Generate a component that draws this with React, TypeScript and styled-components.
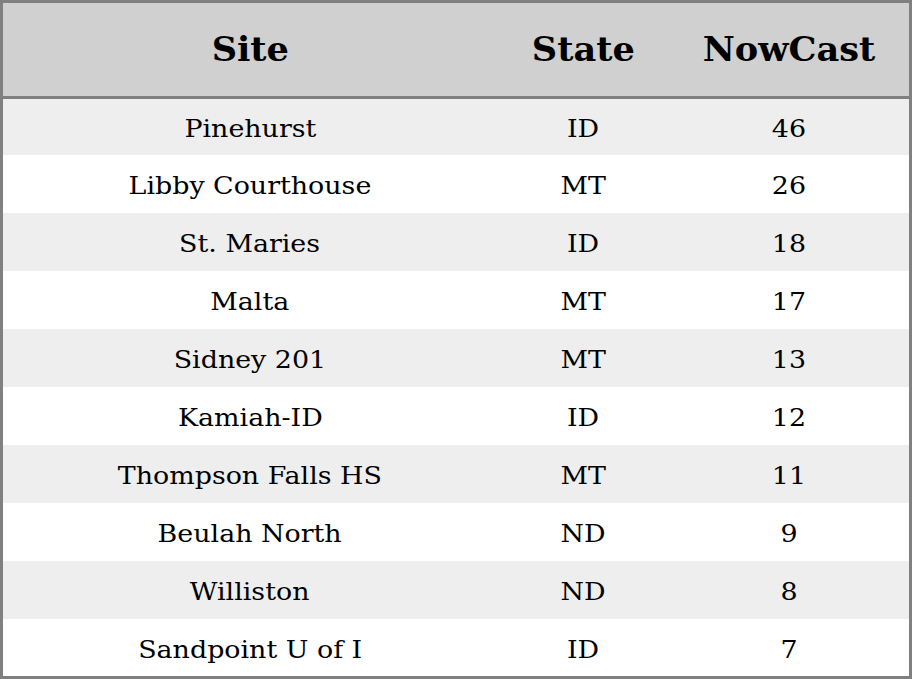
import React from "react";
import styled, { createGlobalStyle } from "styled-components";

const GlobalStyle = createGlobalStyle`
  html, body {
    margin: 0;
    padding: 0;
    background: #ffffff;
  }
`;

const columns = "494px 172px 1fr";

const TableFrame = styled.div`
  box-sizing: border-box;
  width: 912px;
  height: 679px;
  border: 3px solid #808080;
  display: flex;
  flex-direction: column;
  font-family: "DejaVu Serif", "Liberation Serif", serif;
  color: #000000;
`;

const HeaderRow = styled.div`
  display: grid;
  grid-template-columns: ${columns};
  height: 93px;
  background: #d0d0d0;
  border-bottom: 3px solid #808080;
`;

const HeaderCell = styled.div`
  display: flex;
  align-items: center;
  justify-content: center;
  font-size: 33px;
  font-weight: bold;
`;

const Body = styled.div`
  display: grid;
  grid-template-rows: 56px repeat(8, 58px) 57px;
`;

const Row = styled.div<{ $striped: boolean }>`
  display: grid;
  grid-template-columns: ${columns};
  background: ${(p) => (p.$striped ? "#eeeeee" : "#ffffff")};
`;

const Cell = styled.div`
  display: flex;
  align-items: center;
  justify-content: center;
  padding-top: 3px;
  font-size: 25px;
`;

/* the source glyphs are drawn a little wider than the font's own metrics */
const Wide = styled.span<{ $scale: number }>`
  display: inline-block;
  white-space: nowrap;
  transform: scaleX(${(p) => p.$scale});
`;

const rows = [
  ["Pinehurst", "ID", "46"],
  ["Libby Courthouse", "MT", "26"],
  ["St. Maries", "ID", "18"],
  ["Malta", "MT", "17"],
  ["Sidney 201", "MT", "13"],
  ["Kamiah-ID", "ID", "12"],
  ["Thompson Falls HS", "MT", "11"],
  ["Beulah North", "ND", "9"],
  ["Williston", "ND", "8"],
  ["Sandpoint U of I", "ID", "7"],
];

export default function App() {
  return (
    <>
      <GlobalStyle />
      <TableFrame>
        <HeaderRow>
          {["Site", "State", "NowCast"].map((h) => (
            <HeaderCell key={h}>
              <Wide $scale={1.065}>{h}</Wide>
            </HeaderCell>
          ))}
        </HeaderRow>
        <Body>
          {rows.map((r, i) => (
            <Row key={r[0]} $striped={i % 2 === 0}>
              {r.map((v, j) => (
                <Cell key={j}>
                  <Wide $scale={1.075}>{v}</Wide>
                </Cell>
              ))}
            </Row>
          ))}
        </Body>
      </TableFrame>
    </>
  );
}
